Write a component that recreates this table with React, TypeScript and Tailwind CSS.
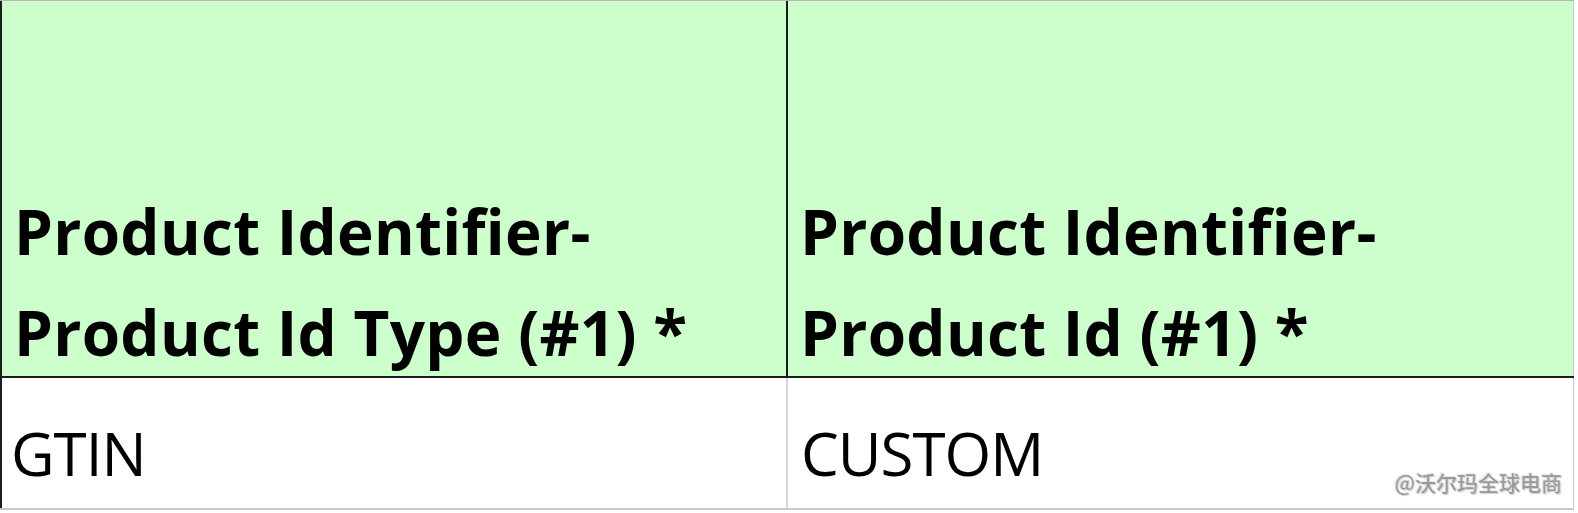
export default function App() {
  const head = "font-['Open_Sans',sans-serif] font-bold text-[62px] leading-[101px] text-black tracking-[0.3px]";
  const body = "font-['Open_Sans',sans-serif] text-[60px] leading-[80px] text-black tracking-[-1px]";
  return (
    <div className="w-[1578px] h-[513px] bg-white">
      <div className="w-[1574px] border-t border-[#b8b8b8]">
        <div className="grid grid-cols-[788px_1fr] h-[377px] bg-[#ccffcc] border-b-2 border-[#1c1c1c]">
          <div className="flex flex-col justify-end pl-[12px] border-l-2 border-r-2 border-[#1c1c1c]">
            <div className={head}>Product Identifier-</div>
            <div className={`${head} -mb-[7px]`}>Product Id Type (#1) *</div>
          </div>
          <div className="flex flex-col justify-end pl-[12px] border-r border-[#c8c8c8]">
            <div className={head}>Product Identifier-</div>
            <div className={`${head} -mb-[7px]`}>Product Id (#1) *</div>
          </div>
        </div>
        <div className="relative grid grid-cols-[788px_1fr] h-[132px] border-b-2 border-[#c8c8c8]">
          <div className="flex items-end pl-[9px] pb-[15px] border-l-2 border-r-2 border-l-[#1c1c1c] border-r-[#d4d4d4]">
            <span className={body}>GTIN</span>
          </div>
          <div className="flex items-end pl-[13px] pb-[15px] border-r border-[#c8c8c8]">
            <span className={body}>CUSTOM</span>
          </div>
          <span className="absolute right-[12px] bottom-[15px] font-['Noto_Sans_CJK_SC',sans-serif] font-medium text-[21px] leading-none text-[#9a9a9a] [text-shadow:0_0_2px_#ffffff,1px_1px_1px_#c4c4c4,-1px_-1px_1px_#e0e0e0]">
            @沃尔玛全球电商
          </span>
        </div>
      </div>
    </div>
  );
}
